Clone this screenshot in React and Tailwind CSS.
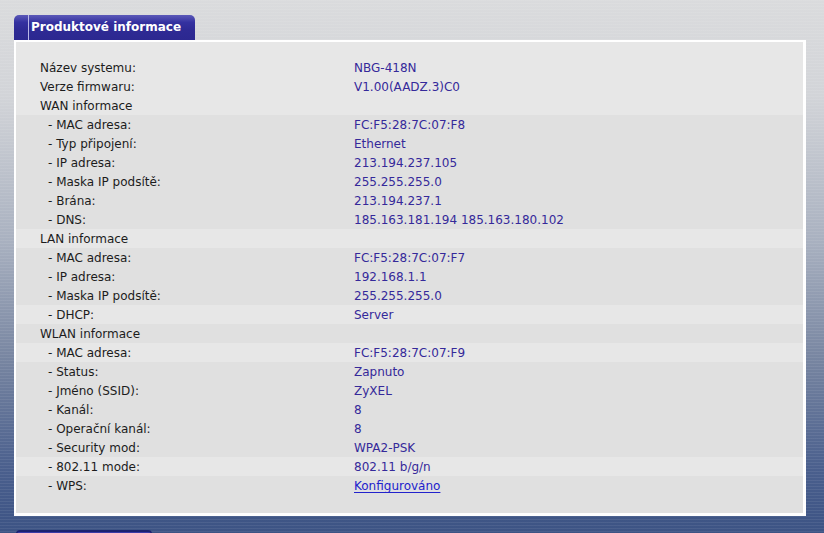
import React from "react";

const groups = [
  {
    tone: "light",
    extra: "pt-4",
    rows: [
      ["Název systemu:", "NBG-418N"],
      ["Verze firmwaru:", "V1.00(AADZ.3)C0"],
      ["WAN informace", ""],
    ],
  },
  {
    tone: "dark",
    rows: [
      ["- MAC adresa:", "FC:F5:28:7C:07:F8", true],
      ["- Typ připojení:", "Ethernet", true],
      ["- IP adresa:", "213.194.237.105", true],
      ["- Maska IP podsítě:", "255.255.255.0", true],
      ["- Brána:", "213.194.237.1", true],
      ["- DNS:", "185.163.181.194 185.163.180.102", true],
    ],
  },
  { tone: "light", rows: [["LAN informace", ""]] },
  {
    tone: "dark",
    rows: [
      ["- MAC adresa:", "FC:F5:28:7C:07:F7", true],
      ["- IP adresa:", "192.168.1.1", true],
      ["- Maska IP podsítě:", "255.255.255.0", true],
    ],
  },
  { tone: "light", rows: [["- DHCP:", "Server", true]] },
  { tone: "dark", rows: [["WLAN informace", ""]] },
  { tone: "light", rows: [["- MAC adresa:", "FC:F5:28:7C:07:F9", true]] },
  {
    tone: "dark",
    rows: [
      ["- Status:", "Zapnuto", true],
      ["- Jméno (SSID):", "ZyXEL", true],
      ["- Kanál:", "8", true],
      ["- Operační kanál:", "8", true],
      ["- Security mod:", "WPA2-PSK", true],
    ],
  },
  { tone: "light", rows: [["- 802.11 mode:", "802.11 b/g/n", true]] },
  {
    tone: "dark",
    extra: "pb-[18px]",
    rows: [["- WPS:", "Konfigurováno", true, true]],
  },
];

const InfoRow = ({ label, value, sub, link }) => (
  <div className="grid grid-cols-[314px_1fr] h-[19px] leading-[19px]">
    <span className={`relative top-px text-[#1c1c1c] ${sub ? "pl-2" : ""}`}>{label}</span>
    {link ? (
      <a href="#" className="relative top-px w-max text-[#2222cc] underline underline-offset-2">
        {value}
      </a>
    ) : (
      <span className="relative top-px text-[#35299a]">{value}</span>
    )}
  </div>
);

const App = () => {
  return (
    <div className="min-h-[533px] h-[533px] overflow-hidden pl-[14px] pt-[15px] bg-[linear-gradient(to_bottom,#dadbdd_0%,#d2d4d8_18%,#a9b1c0_45%,#7684a0_68%,#4a5f8d_88%,#3c5384_100%)] relative font-['DejaVu_Sans',Verdana,sans-serif] text-[12px]">
      <div className="absolute inset-0 pointer-events-none bg-[repeating-linear-gradient(to_bottom,rgba(255,255,255,0.07)_0px,rgba(255,255,255,0.07)_1px,transparent_1px,transparent_3px)]" />

      <div className="relative">
        {/* tab */}
        <div className="w-[181px] h-[25px] rounded-t-[5px] bg-[linear-gradient(to_bottom,#5a58b8_0%,#3431a0_30%,#2e2a94_60%,#2c2890_100%)] flex items-stretch">
          <div className="w-[15px] shrink-0 border-r border-[#b9b8e6]" />
          <span className="pl-[2px] pt-[4px] text-white font-bold text-[12px] leading-[17px] whitespace-nowrap">
            Produktové informace
          </span>
        </div>

        {/* panel */}
        <div className="w-[792px] border-l-2 border-t-2 border-r-[3px] border-b-[3px] border-white">
          {groups.map((g, i) => (
            <div
              key={i}
              className={`pl-6 ${g.tone === "light" ? "bg-[#e7e7e7]" : "bg-[#e0e0e0]"} ${g.extra || ""}`}
            >
              {g.rows.map(([label, value, sub, link], j) => (
                <InfoRow key={j} label={label} value={value} sub={sub} link={link} />
              ))}
            </div>
          ))}
        </div>

        {/* next tab peeking */}
        <div className="mt-[14px] ml-[2px] w-[136px] h-[8px] rounded-t-[4px] border-t-2 border-x border-[#1c2270] bg-[#3b3aa6]" />
      </div>
    </div>
  );
};

export default App;
